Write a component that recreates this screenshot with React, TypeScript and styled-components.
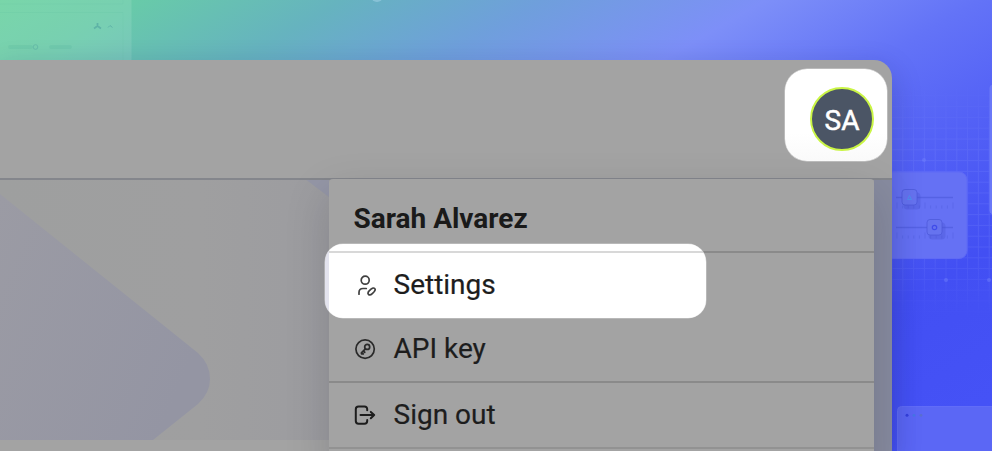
import React from "react";
import styled, { createGlobalStyle } from "styled-components";

const GlobalStyle = createGlobalStyle`
  * { box-sizing: border-box; }
  body { margin: 0; overflow: hidden; font-family: Roboto, "Liberation Sans", sans-serif; }
`;

const Desktop = styled.main`
  position: relative;
  width: 992px;
  height: 451px;
  padding-top: 60px;
  overflow: hidden;
  background: linear-gradient(
    150deg,
    #69d19f 0px,
    #68cba8 66px,
    #66b3bf 172px,
    #6f9fdc 272px,
    #7d8ff8 383px,
    #6373f7 490px,
    #5361f6 590px,
    #424ff3 710px,
    #4653f7 883px
  );
`;

const Backdrop = styled.svg`
  position: absolute;
  inset: 0;
`;

const Window = styled.section`
  position: relative;
  display: flex;
  flex-direction: column;
  width: 892px;
  height: 391px;
  border-top-right-radius: 18px;
  background: #a3a3a3;
  box-shadow: 0 10px 30px rgba(20, 25, 90, 0.24);
`;

const Header = styled.header`
  display: flex;
  flex: none;
  justify-content: flex-end;
  align-items: flex-start;
  height: 120px;
  padding: 9px 5px 0 0;
  border-bottom: 2px solid #84868c;
`;

const AvatarSpotlight = styled.div`
  z-index: 3;
  display: flex;
  align-items: center;
  justify-content: flex-end;
  width: 102px;
  height: 92px;
  padding: 8px 13px 0 0;
  border-radius: 22px;
  background: linear-gradient(#fff 70%, #fafafa);
  box-shadow: 0 0 0 0.5px #d4d4d4;
`;

const Avatar = styled.div`
  display: grid;
  place-items: center;
  width: 64px;
  height: 64px;
  border: 2px solid #caf545;
  border-radius: 50%;
  background: #4b5565;
  color: #fff;
  font-size: 28px;
  line-height: 33px;
  padding-top: 3px;
  -webkit-text-stroke: 0.5px #fff;
`;

const Content = styled.div`
  display: flex;
  flex: 1;
  align-items: flex-start;
  overflow: hidden;
`;

const Banner = styled.div`
  flex: 1;
  height: 260px;
  background: linear-gradient(90deg, #9e9f9f 0, #9f9fa0 200px, #9c9ca0 329px);
`;

const SideStrip = styled.div`
  width: 18px;
  height: 271px;
  background: #878b9f;
`;

const Menu = styled.nav`
  position: absolute;
  top: 119px;
  left: 329px;
  width: 545px;
  height: 290px;
  border-radius: 4px 4px 0 0;
  background: #a3a3a3;
  box-shadow: 0 16px 44px rgba(15, 15, 30, 0.17);
`;

const MenuTitle = styled.div`
  display: flex;
  align-items: center;
  height: 72px;
  padding: 7px 24px 0 24.5px;
  color: #1a1a1a;
  font-size: 28px;
  font-weight: 700;
`;

const Divider = styled.hr<{ $faint?: boolean }>`
  height: 2px;
  margin: 0;
  border: 0;
  background: ${(p) => (p.$faint ? "#929292" : "#8a8a8a")};
`;

const MenuItem = styled.div`
  position: relative;
  z-index: 2;
  display: flex;
  align-items: center;
  gap: 16.5px;
  height: 64px;
  padding-left: 24px;
  color: #1d1d1d;
  font-size: 28px;
`;

const Label = styled.span`
  padding-bottom: 2px;
  -webkit-text-stroke: 0.2px currentColor;
`;

const MenuSpotlight = styled.div`
  position: absolute;
  top: 65px;
  left: -4px;
  width: 381px;
  height: 74px;
  border-radius: 18px;
  background:
    linear-gradient(#e3e3ee, #e3e3ee) 0 0 / 4px 100% no-repeat,
    linear-gradient(#d8d8d8, #d8d8d8) 0 7px / 100% 2px no-repeat,
    #fff;
  box-shadow: 0 0 0 0.5px #cecece;
`;

const Icon = styled.svg<{ $weight?: number; $color?: string }>`
  flex: none;
  width: 24px;
  height: 24px;
  fill: none;
  stroke: ${(p) => p.$color ?? "#1d1d1d"};
  stroke-width: ${(p) => p.$weight ?? 1.7};
  stroke-linecap: round;
  stroke-linejoin: round;
`;

const UserEditIcon = () => (
  <Icon viewBox="0 0 24 24" $color="#404040">
    <circle cx="12.2" cy="7.2" r="4" />
    <path d="M6 21.2v-1.8c0-2.6 1.600-3.900 4-3.900h3.300" />
    <path d="M15.600 21.500c-1-1-.5-2.500.8-3.800l1.600-1.500c1.300-1.200 2.900-1.600 3.700-.7.8.8.4 2.200-.8 3.500l-1.600 1.600c-1.200 1.200-2.800 1.700-3.700.9Z" />
  </Icon>
);

const KeyIcon = () => (
  <Icon viewBox="0 0 24 24" $color="#2a2a2a">
    <circle cx="12.1" cy="12.1" r="9.200" />
    <circle cx="14.2" cy="9.900" r="2.500" />
    <path d="m12.400 11.800-4 4 .2 1 1.600.1m0-2.900 1.500 1.300" strokeWidth="1.800" />
  </Icon>
);

const SignOutIcon = () => (
  <Icon viewBox="0 0 24 24" $weight={2}>
    <path d="M14.200 7.300V6.200c0-1.700-1-2.700-2.700-2.700H5.500c-1.700 0-2.700 1-2.700 2.700v11.800c0 1.700 1 2.700 2.700 2.700h6c1.700 0 2.700-1 2.700-2.700v-1.100" />
    <path d="M7.500 12.100h13.700m-3.400-3.200 3.400 3.200-3.400 3.200" />
  </Icon>
);

const Arrowhead = () => (
  <svg width="329" height="260">
    <defs>
      <linearGradient id="arrow" x1="0" y1="0" x2="1" y2="0.5">
        <stop offset="0" stopColor="#9b9ba4" />
        <stop offset="1" stopColor="#9495a3" />
      </linearGradient>
    </defs>
    <path d="M0 14 198 173Q210 184 210 199Q210 213 198 224L153 260H0Z" fill="url(#arrow)" />
    <path d="M306.500 0H329V17Z" fill="#9496a6" />
  </svg>
);

const TICKS = Array.from({ length: 11 }, (_, i) => 897 + i * 5.6);

const Slider = ({ y, knob }: { y: number; knob: number }) => (
  <g stroke="#4b58d8" fill="none">
    <path d={`M896 ${y}H953`} strokeWidth="1.500" opacity="0.6" />
    {TICKS.map((x, i) => (
      <path key={x} d={`M${x} ${y + (i % 5 === 0 ? 5 : 8)}V${y + 11}`} opacity="0.35" />
    ))}
    <rect x={knob - 6} y={y - 5} width="17" height="17" rx="4" fill="#4450cc" stroke="none" opacity="0.3" />
    <rect x={knob - 7.5} y={y - 8} width="15" height="15.500" rx="3" fill="#6673ef" strokeWidth="0.900" strokeOpacity="0.8" />
  </g>
);

const Decorations = () => (
  <Backdrop width="992" height="451" aria-hidden="true">
    <defs>
      <pattern id="grid" x="891.500" y="84.500" width="10.800" height="10.800" patternUnits="userSpaceOnUse">
        <path d="M0.500 0V10.800M0 0.500H10.800" stroke="#8290ff" strokeWidth="1" />
      </pattern>
      <linearGradient id="fade" x1="0" y1="0" x2="0" y2="1">
        <stop offset="0" stopColor="#fff" stopOpacity="0" />
        <stop offset="0.300" stopColor="#fff" />
        <stop offset="0.700" stopColor="#fff" />
        <stop offset="1" stopColor="#fff" stopOpacity="0" />
      </linearGradient>
      <mask id="gridMask">
        <rect x="880" y="80" width="112" height="240" fill="url(#fade)" />
      </mask>
    </defs>
    <rect x="-2" y="-2" width="133.500" height="70" fill="#fff" fillOpacity="0.11" />
    <g stroke="#4aae93" fill="none" opacity="0.3">
      <path d="M0 4H123V0M0 12.500H123V60" strokeWidth="0.500" opacity="0.6" />
      <path d="M97.500 23V26M97.500 26 94 28.500M97.500 26l3.500 2.500" stroke="#25758b" strokeWidth="1.800" />
      <path d="M108 27.500 110 25.500 112.500 27.500" stroke="#25758b" />
      <path d="M10 47H31M51 47H70" strokeWidth="4" strokeLinecap="round" opacity="0.500" />
      <circle cx="35.500" cy="47" r="2.300" stroke="#25758b" opacity="0.7" />
    </g>
    <circle cx="377" cy="-4" r="6" fill="#b9dff2" fillOpacity="0.400" />
    <rect x="880" y="80" width="112" height="240" fill="url(#grid)" mask="url(#gridMask)" opacity="0.200" />
    <g fill="#7988ff" opacity="0.400">
      <circle cx="924" cy="160" r="2" />
      <circle cx="946" cy="280" r="2" />
      <circle cx="989" cy="280" r="2" />
    </g>
    <rect x="860" y="172" width="107" height="86.500" rx="8" fill="#6571f4" stroke="#5f6af6" />
    <Slider y={197.5} knob={909.5} />
    <Slider y={227.5} knob={934.5} />
    <path d="m909.500 195.500 2 4h-4Z" fill="none" stroke="#4f90ef" />
    <circle cx="934.500" cy="227.500" r="2.200" fill="none" stroke="#3f4cea" strokeWidth="1.200" />
    <rect x="989.500" y="84.500" width="20" height="130" rx="4" fill="#6a78f8" />
    <rect x="897.500" y="406.500" width="110" height="60" rx="4" fill="#5b67f5" stroke="#616cf8" />
    <circle cx="907" cy="415.300" r="1.500" fill="#3541dc" />
    <circle cx="914" cy="415.300" r="1.400" fill="#4676e8" />
    <circle cx="921" cy="415.300" r="1.400" fill="#5a6fd0" />
  </Backdrop>
);

export default function App() {
  return (
    <>
      <GlobalStyle />
      <Desktop>
        <Decorations />
        <Window>
          <Header>
            <AvatarSpotlight>
              <Avatar>SA</Avatar>
            </AvatarSpotlight>
          </Header>
          <Content>
            <Banner>
              <Arrowhead />
            </Banner>
            <SideStrip />
          </Content>
          <Menu>
            <MenuTitle>Sarah Alvarez</MenuTitle>
            <Divider />
            <MenuSpotlight />
            <MenuItem>
              <UserEditIcon />
              <Label>Settings</Label>
            </MenuItem>
            <MenuItem>
              <KeyIcon />
              <Label>API key</Label>
            </MenuItem>
            <Divider />
            <MenuItem>
              <SignOutIcon />
              <Label>Sign out</Label>
            </MenuItem>
            <Divider $faint />
          </Menu>
        </Window>
      </Desktop>
    </>
  );
}
